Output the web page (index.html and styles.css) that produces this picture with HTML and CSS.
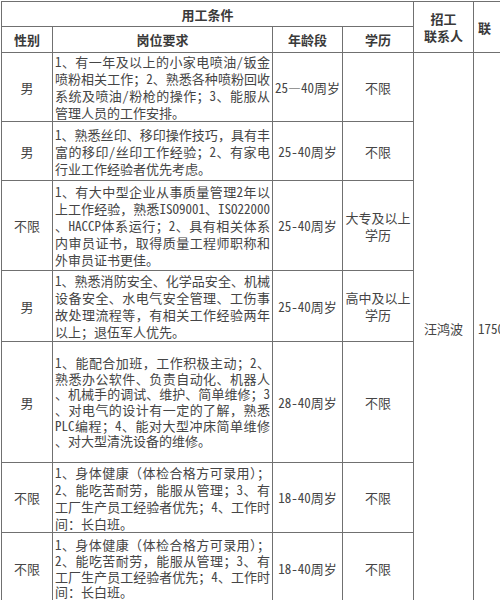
FILE: index.html
```html
<!DOCTYPE html>
<html lang="zh">
<head>
<meta charset="utf-8">
<link rel="stylesheet" href="styles.css">
</head>
<body>
<table class="jobs">
  <colgroup>
    <col class="c-sex"><col class="c-req"><col class="c-age"><col class="c-edu"><col class="c-contact"><col class="c-phone">
  </colgroup>
  <thead>
    <tr class="h1">
      <th colspan="4">用工条件</th>
      <th rowspan="2" class="contact-h">招工<br>联系人</th>
      <th rowspan="2" class="phone-h">联系电话</th>
    </tr>
    <tr class="h2">
      <th>性别</th>
      <th>岗位要求</th>
      <th>年龄段</th>
      <th>学历</th>
    </tr>
  </thead>
  <tbody>
    <tr class="r1">
      <td>男</td>
      <td class="req"><span>1、有一年及以上的小家电喷油/钣金</span><span>喷粉相关工作；2、熟悉各种喷粉回收</span><span>系统及喷油/粉枪的操作；3、能服从</span><span>管理人员的工作安排。</span></td>
      <td>25—40周岁</td>
      <td>不限</td>
      <td rowspan="7" class="person">汪鸿波</td>
      <td rowspan="7" class="phone">1750</td>
    </tr>
    <tr class="r2">
      <td>男</td>
      <td class="req"><span>1、熟悉丝印、移印操作技巧，具有丰</span><span>富的移印/丝印工作经验；2、有家电</span><span>行业工作经验者优先考虑。</span></td>
      <td>25-40周岁</td>
      <td>不限</td>
    </tr>
    <tr class="r3">
      <td>不限</td>
      <td class="req"><span>1、有大中型企业从事质量管理2年以</span><span>上工作经验，熟悉ISO9001、ISO22000</span><span>、HACCP体系运行；2、具有相关体系</span><span>内审员证书，取得质量工程师职称和</span><span>外审员证书更佳。</span></td>
      <td>25-40周岁</td>
      <td>大专及以上<br>学历</td>
    </tr>
    <tr class="r4">
      <td>男</td>
      <td class="req"><span>1、熟悉消防安全、化学品安全、机械</span><span>设备安全、水电气安全管理、工伤事</span><span>故处理流程等，有相关工作经验两年</span><span>以上；退伍军人优先。</span></td>
      <td>25-40周岁</td>
      <td>高中及以上<br>学历</td>
    </tr>
    <tr class="r5">
      <td>男</td>
      <td class="req tight"><span>1、能配合加班，工作积极主动；2、</span><span>熟悉办公软件、负责自动化、机器人</span><span>、机械手的调试、维护、简单维修；3</span><span>、对电气的设计有一定的了解，熟悉</span><span>PLC编程；4、能对大型冲床简单维修</span><span>、对大型清洗设备的维修。</span></td>
      <td>28-40周岁</td>
      <td>不限</td>
    </tr>
    <tr class="r6">
      <td>不限</td>
      <td class="req"><span>1、身体健康（体检合格方可录用）；</span><span>2、能吃苦耐劳，能服从管理；3、有</span><span>工厂生产员工经验者优先；4、工作时</span><span>间：长白班。</span></td>
      <td>18-40周岁</td>
      <td>不限</td>
    </tr>
    <tr class="r7">
      <td>不限</td>
      <td class="req tight"><span>1、身体健康（体检合格方可录用）；</span><span>2、能吃苦耐劳，能服从管理；3、有</span><span>工厂生产员工经验者优先；4、工作时</span><span>间：长白班。</span></td>
      <td>18-40周岁</td>
      <td>不限</td>
    </tr>
  </tbody>
</table>
</body>
</html>
```
FILE: styles.css
```css
html, body {
  margin: 0;
  padding: 0;
  overflow: hidden;
  background: #ffffff;
}

body {
  padding: 1px 0 0 1px;
  width: 600px;
  font-family: "Noto Sans Mono CJK SC", "Noto Sans CJK SC", "DejaVu Sans", sans-serif;
  font-size: 13px;
  color: #454545;
}

.jobs {
  border-collapse: collapse;
  table-layout: fixed;
  width: 533px;
}

.c-sex { width: 51px; }
.c-req { width: 220px; }
.c-age { width: 70px; }
.c-edu { width: 71px; }
.c-contact { width: 60px; }
.c-phone { width: 61px; }

.jobs th,
.jobs td {
  border: 1px solid #707070;
  padding: 0 2px;
  text-align: center;
  vertical-align: middle;
  line-height: 17px;
  white-space: nowrap;
}

.jobs th {
  font-weight: bold;
  color: #3a3a3a;
}

.h1 { height: 25px; }
.h2 { height: 26px; }

.contact-h { line-height: 18px; }

.jobs .phone-h,
.jobs .phone {
  text-align: left;
  padding-left: 4px;
}

.jobs .phone-h {
  letter-spacing: 12px;
}

.r1 { height: 69px; }
.r2 { height: 59px; }
.r3 { height: 90px; }
.r4 { height: 71px; }
.r5 { height: 121px; }
.r6 { height: 70px; }
.r7 { height: 72px; }

.jobs td.req {
  text-align: left;
  padding: 0 2px;
}

.req span {
  display: block;
  text-align: justify;
  text-align-last: justify;
  white-space: nowrap;
}

.req span:last-child {
  text-align-last: auto;
}

.req.tight span {
  line-height: 15.7px;
}
```
